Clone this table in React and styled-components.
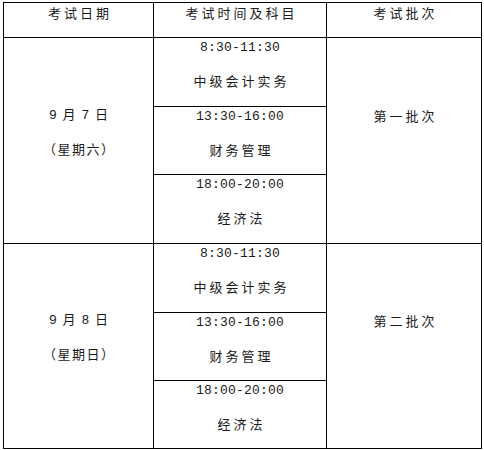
import React from 'react'
import styled, { createGlobalStyle } from 'styled-components'

const GlobalStyle = createGlobalStyle`
  body {
    margin: 0;
    padding: 2px 3px;
    background: #fff;
  }
`

const Table = styled.div`
  width: 479px;
  border-top: 1px solid #000;
  border-left: 1px solid #000;
  box-sizing: border-box;
  font-family: "Noto Sans CJK SC", sans-serif;
  color: #1a1a1a;
`

const Row = styled.div`
  display: grid;
  grid-template-columns: 150px 173px 155px;
`

const Cell = styled.div`
  box-sizing: border-box;
  border-right: 1px solid #000;
  border-bottom: 1px solid #000;
  display: flex;
  flex-direction: column;
  align-items: center;
  justify-content: ${(p) => (p.$center ? 'center' : 'flex-start')};
  gap: 13px;
  height: ${(p) => (p.$h ? `${p.$h}px` : 'auto')};
  padding-bottom: ${(p) => (p.$center ? '17px' : '0')};
`

const Stack = styled.div`
  display: flex;
  flex-direction: column;
  border-right: 1px solid #000;
`

const SubCell = styled(Cell)`
  border-right: none;
`

const Line = styled.div`
  height: 20px;
  line-height: 20px;
  font-size: 13px;
  white-space: pre;
  letter-spacing: ${(p) => p.$ls ?? 3}px;
  margin-right: ${(p) => -(p.$ls ?? 3)}px;
`

const Time = styled(Line)`
  font-family: "Liberation Mono", "Noto Sans CJK SC", monospace;
  letter-spacing: 0.2px;
  margin-right: 0;
`

const DateLine = styled(Line)`
  font-family: "Liberation Mono", "Noto Sans CJK SC", monospace;
  word-spacing: -4px;
`

const groups = [
  { date: '9 月 7 日', week: '（星期六）', batch: '第一批次', heights: [69, 68, 69] },
  { date: '9 月 8 日', week: '（星期日）', batch: '第二批次', heights: [69, 68, 68] },
]

const sessions = [
  { time: '8:30-11:30', subject: '中级会计实务' },
  { time: '13:30-16:00', subject: '财务管理' },
  { time: '18:00-20:00', subject: '经济法' },
]

export default function App() {
  return (
    <>
      <GlobalStyle />
      <Table>
        <Row>
          <Cell $h={35}><Line>考试日期</Line></Cell>
          <Cell $h={35}><Line>考试时间及科目</Line></Cell>
          <Cell $h={35}><Line>考试批次</Line></Cell>
        </Row>
        {groups.map((g) => (
          <Row key={g.date}>
            <Cell $center>
              <DateLine $ls={1}>{g.date}</DateLine>
              <Line $ls={1.5}>{g.week}</Line>
            </Cell>
            <Stack>
              {sessions.map((s, i) => (
                <SubCell key={s.time} $h={g.heights[i]}>
                  <Time>{s.time}</Time>
                  <Line>{s.subject}</Line>
                </SubCell>
              ))}
            </Stack>
            <Cell $center>
              <Line>{g.batch}</Line>
              <Line>{' '}</Line>
            </Cell>
          </Row>
        ))}
      </Table>
    </>
  )
}
